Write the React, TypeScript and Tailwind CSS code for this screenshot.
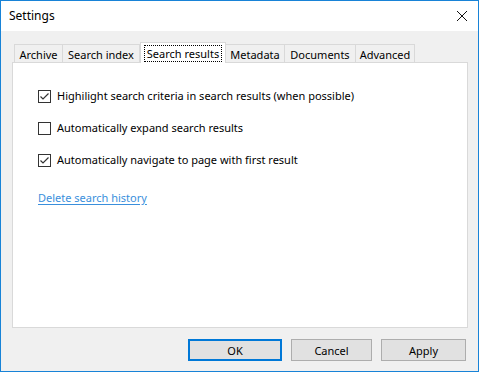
import { useState } from "react";

const tabs = [
  { label: "Archive", w: "w-[49px]" },
  { label: "Search index", w: "w-[77px]" },
  { label: "Search results", w: "w-[86px]" },
  { label: "Metadata", w: "w-[59px]" },
  { label: "Documents", w: "w-[71px]" },
  { label: "Advanced", w: "w-[59px]" },
];

function CheckBox({ checked, onClick }: { checked: boolean; onClick: () => void }) {
  return (
    <button
      onClick={onClick}
      className="w-[13px] h-[13px] border border-[#333333] bg-white flex items-center justify-center shrink-0"
    >
      {checked && (
        <svg width="11" height="11" viewBox="0 0 11 11">
          <path d="M1.5 5.5 L4 8 L9.5 2.5" fill="none" stroke="#333333" strokeWidth="1.2" />
        </svg>
      )}
    </button>
  );
}

export default function App() {
  const [opts, setOpts] = useState({ highlight: true, expand: false, navigate: true });
  const toggle = (k: keyof typeof opts) => setOpts((p) => ({ ...p, [k]: !p[k] }));

  const rows: { key: keyof typeof opts; label: string }[] = [
    { key: "highlight", label: "Highilight search criteria in search results (when possible)" },
    { key: "expand", label: "Automatically expand search results" },
    { key: "navigate", label: "Automatically navigate to page with first result" },
  ];

  return (
    <div
      className="w-[479px] h-[372px] border border-[#1883d7] flex flex-col text-[11px] text-black bg-white"
      style={{ fontFamily: '"Noto Sans", sans-serif' }}
    >
      {/* title bar */}
      <div className="h-[30px] flex items-center justify-between bg-white pl-[8px] pr-[10px]">
        <span className="text-[12px]">Settings</span>
        <svg width="12" height="12" viewBox="0 0 12 12">
          <path d="M1 1 L11 11 M11 1 L1 11" stroke="#111" strokeWidth="1" />
        </svg>
      </div>

      <div className="flex-1 bg-[#f0f0f0] flex flex-col">
        {/* tabs */}
        <div className="flex items-end ml-[13px] mt-[11px] h-[20px] relative z-10 whitespace-nowrap">
          {tabs.map((t, i) => {
            const active = t.label === "Search results";
            return (
              <div
                key={t.label}
                className={
                  active
                    ? `${t.w} h-[21px] -mb-px bg-white border border-b-0 border-[#d9d9d9] flex items-start justify-center pt-[2px]`
                    : `${t.w} h-[18px] bg-[#f0f0f0] border-t border-r border-[#d9d9d9] flex items-center justify-center ${i === 0 ? "border-l" : ""}`
                }
              >
                {active ? (
                  <span className="border border-dotted border-black px-[2px] leading-[15px]">{t.label}</span>
                ) : (
                  <span className="leading-[16px] pt-[2px]">{t.label}</span>
                )}
              </div>
            );
          })}
        </div>

        {/* panel */}
        <div className="ml-[11px] w-[456px] h-[266px] bg-white border border-[#d9d9d9] pl-[25px] pt-[17px] flex flex-col">
          {rows.map((r) => (
            <div key={r.key} className="h-[32px] flex items-center gap-[6px]">
              <CheckBox checked={opts[r.key]} onClick={() => toggle(r.key)} />
              <span>{r.label}</span>
            </div>
          ))}
          <div className="h-[32px] mt-[6px] flex items-center">
            <a href="#" className="text-[#3a8fdc] underline underline-offset-2">
              Delete search history
            </a>
          </div>
        </div>

        {/* buttons */}
        <div className="flex justify-end gap-[9px] mt-[11px] pr-[12px]">
          <button className="w-[94px] h-[22px] bg-[#e1e1e1] border-2 border-[#0078d7] leading-none">OK</button>
          <button className="w-[81px] h-[22px] bg-[#e1e1e1] border border-[#adadad] leading-none">Cancel</button>
          <button className="w-[85px] h-[22px] bg-[#e1e1e1] border border-[#adadad] leading-none">Apply</button>
        </div>
      </div>
    </div>
  );
}
